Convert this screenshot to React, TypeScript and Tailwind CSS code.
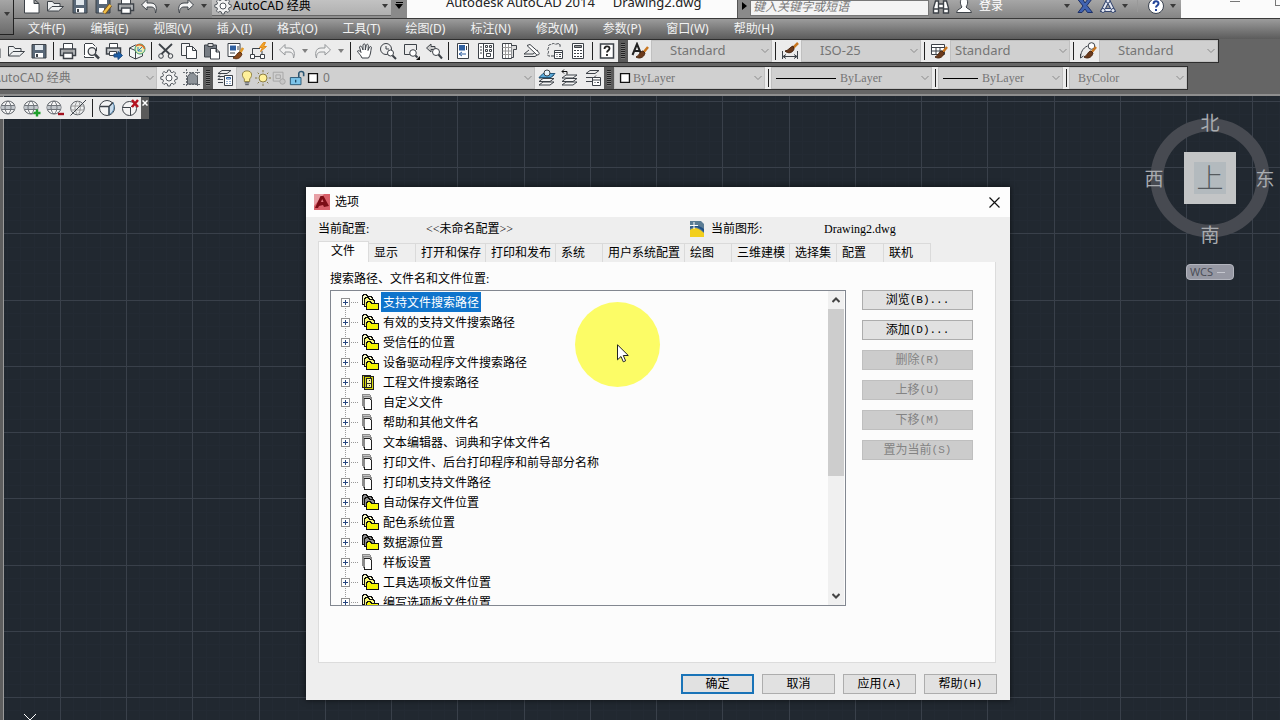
import React from "react";
import type { ReactNode } from "react";

const UI = "font-['Noto_Sans','Noto_Sans_CJK_SC',sans-serif]";
const SONG = "font-['Liberation_Serif','Noto_Sans_CJK_SC',serif]";

const GLOBE = (
  <>
    <ellipse cx="8" cy="8.500" rx="7" ry="6.500" fill="#f7f7f7" stroke="#5b6066" />
    <path d="M1.500 6.500h13v4h-13z" fill="#c2c7cc" stroke="none" />
    <path d="M1.500 6.500h13M1.500 10.500h13M8 2c-4 3-4 10 0 13M8 2c4 3 4 10 0 13" stroke="#70757b" />
  </>
);

const BRUSH = (
  <>
    <path d="M17 5l-5 6" stroke="#c9761f" strokeWidth="2.500" />
    <path d="M12 9c-3 0-3 4-7 6 3 2 8 1 9-4z" fill="#6b3a1c" stroke="#4a2812" />
  </>
);

const SHEETS = (
  <path d="M5 6h11l-4 3H1zM5 9.500h11l-4 3H1zM5 13h11l-4 3H1z" fill="#f4f4f4" />
);

// every drawing uses an 18 x 18 box
const ICONS: Record<string, ReactNode> = {
  new: <path d="M1.500 2h9.500l5 4.500V16H1.500zM11 2v4.500h5" fill="#fff" />,
  open: <path d="M1.500 14V4.500h5l1.500 2h6v3M1.500 14l4.500-4.500h11.500l-5 4.500z" fill="#eef0f1" />,
  save: (
    <>
      <path d="M2 2.500h14v13.500H2z" fill="#596878" />
      <path d="M5 3h8v5H5z" fill="#dfe6ec" stroke="none" />
      <path d="M5 11h8v4.500H5z" fill="#fff" stroke="none" />
      <path d="M7 12v3" strokeWidth="2" />
    </>
  ),
  saveas: (
    <>
      <path d="M2 2.500h14v13.500H2z" fill="#596878" />
      <path d="M5 3h8v4H5zM5 11h5v4.500H5z" fill="#fff" stroke="none" />
      <path d="M16.500 8L10 16" stroke="#7a4d12" strokeWidth="4" />
      <path d="M16.500 8L10 16" stroke="#f0c04a" strokeWidth="2.500" />
    </>
  ),
  print: (
    <>
      <path d="M4.500 7V1.500h9V7" fill="#fff" />
      <path d="M1.500 7h15v6.500h-15z" fill="#c9cccf" strokeWidth="1.500" />
      <path d="M4.500 11h9v5.500h-9z" fill="#fff" strokeWidth="1.500" />
      <path d="M3.500 9h11" stroke="#777" />
    </>
  ),
  preview: (
    <>
      <path d="M12 15.500H2.500v-14h8l4 4V9" fill="#fff" strokeDasharray="11 1" />
      <circle cx="10" cy="9.500" r="3.800" fill="#eee" strokeWidth="1.300" />
      <path d="M13 12.500l4 4" strokeWidth="2.500" />
    </>
  ),
  plot: (
    <>
      <path d="M4.500 6V1.500h8V6" fill="#fff" />
      <path d="M1.500 6h14v6h-14z" fill="#c9cccf" strokeWidth="1.500" />
      <path d="M4.500 9.500h7v4h-7z" fill="#fff" />
      <path d="M9 12h4V9.500l4.500 4-4.500 4V15H9z" fill="#1d5fa8" stroke="#1d4d84" />
    </>
  ),
  print3d: (
    <>
      <path d="M1.500 6l6-3 7 2v9l-7 3-6-3z" fill="#f2f5f5" />
      <path d="M1.500 6l6 2.500v8.500" />
      <circle cx="12" cy="7" r="5" fill="#e9efb4" stroke="#3c9a6b" />
      <path d="M8 4c4-3 8 0 8.500 3" stroke="#e06a2a" strokeWidth="1.500" />
      <path d="M10 9l4-4M10 5v4h4" stroke="#2f7fc2" />
    </>
  ),
  cut: (
    <>
      <path d="M2 2l10.500 10M15 2L4.500 12" strokeWidth="1.800" />
      <circle cx="4" cy="14" r="2.300" />
      <circle cx="13.500" cy="14" r="2.300" />
    </>
  ),
  copy: (
    <>
      <path d="M1.500 1.500h8v12h-8z" fill="#f4f4f4" />
      <path d="M6.500 4.500h6l4 4v8h-10zM12.500 4.500v4h4" fill="#fff" />
    </>
  ),
  paste: (
    <>
      <path d="M1.500 3h12v12h-12z" fill="#777d84" />
      <path d="M5 1.500h5v3H5z" fill="#ddd" />
      <path d="M7.500 6.500h5.500l3.500 3.500v7h-9zM13 6.500V10h3.500" fill="#fff" />
    </>
  ),
  match: (
    <>
      <path d="M2 1.500h12v13H2z" fill="#fff" />
      <path d="M4 3.500h6v5H4z" fill="#2e5fa0" stroke="none" />
      <path d="M12 4v4M4 11h5" />
      <path d="M17 6l-3 5" stroke="#e09a2c" strokeWidth="2.500" />
      <path d="M14 10c-4 1-3 4-7 6 4 2 8 0 9-4z" fill="#8a4a1c" stroke="#5d3112" />
    </>
  ),
  block: (
    <>
      <path d="M3.500 13V6.500H11M5 14.500h8V9" />
      <path d="M1.500 12.500h4v4h-4zM11.500 12.500h4v4h-4z" fill="#fff" />
      <path d="M14.500.5l-4 5h3l-2 4 6-5h-3l2-4z" fill="#f5a623" stroke="#e08a1c" />
    </>
  ),
  undo: (
    <path d="M7 2.500L1.500 8 7 13v-3h4c3 0 4.500 2 4.500 6 1.500-3 1.500-10-4.500-10H7z" fill="#f4f4f4" />
  ),
  redo: (
    <path d="M11 2.500L16.500 8 11 13v-3H7c-3 0-4.500 2-4.500 6C1 13 1 6 7 6h4z" fill="#f4f4f4" />
  ),
  pan: (
    <path
      d="M6 16c-1-3-4-5-4.500-7 1-1 2.500 0 3.500 1.500L3.500 5c.5-1.500 2-1 2.500.5L7 8V3c.5-1.500 2-1.500 2.300 0V8l1-5c.7-1.300 2.200-.8 2 .7L12 8.500l1.500-3.500c1-1 2.200-.3 1.800 1C14.500 10 15 12 12.500 16z"
      fill="#fff"
    />
  ),
  zoomrt: (
    <>
      <circle cx="7" cy="7" r="5.500" fill="#eee" />
      <path d="M7 4v3h3" />
      <circle cx="11.500" cy="11" r="3" fill="#fff" />
      <path d="M13.500 13.500l3.500 3.500" strokeWidth="2" />
    </>
  ),
  zoomwin: (
    <>
      <path d="M8 12.500H2.500v-10h12V8" />
      <circle cx="11" cy="11" r="3.300" fill="#fff" />
      <path d="M13.500 13.500l2 2" strokeWidth="2" />
      <path d="M18 14v4h-4z" fill="#111" stroke="none" />
    </>
  ),
  zoomprev: (
    <>
      <path d="M6 2L1.500 6 6 10V7.500h4v-3H6z" fill="#ccc" />
      <circle cx="11" cy="10" r="3.500" fill="#fff" />
      <path d="M13.500 12.500l3.500 4" strokeWidth="2" />
    </>
  ),
  props: (
    <>
      <path d="M3.500 1.500h11v15h-11z" fill="#fff" />
      <path d="M5 3h6v5.500H5z" fill="#2e5fa0" stroke="none" />
      <path d="M12.500 4v4" />
      <path d="M8 10l-3 2 3 2M6 12h6" stroke="#2e5fa0" />
    </>
  ),
  design: (
    <>
      <path d="M1.500 1.500h15v15h-15zM6.500 1.500v15" fill="#fff" />
      <path d="M3 5h2M3 8h2M3 11h2" />
      <path d="M8.500 3.500h2v2h-2zM12.500 3.500h2v2h-2zM8.500 7.500h2v2h-2zM12.500 7.500h2v2h-2zM9.500 11.500h4v3h-4z" />
    </>
  ),
  palette: (
    <>
      <path d="M2.500 1.500h9v15h-9z" fill="#fff" />
      <path d="M11.500 3.500h5v4h-3v8h-2" fill="#ddd" />
      <path d="M2.500 5.500h9M2.500 9h9M2.500 12.500h9M5.500 2v14M8.500 2v14" stroke="#999" />
    </>
  ),
  sheetset: (
    <>
      <path d="M1 12h9l5-4M1 14.500h11l4-3M1 12l5-4" />
      <path d="M4 3.500l3-1 9 8c1 2-1 3-2.500 2z" fill="#fff" />
    </>
  ),
  markup: (
    <>
      <path
        d="M8 14H2.500c-2-2 .5-3 0-4.500-2-2 .5-3 0-4.500C2 2 5 3 6 2c2-1.500 3 1 4.500 0 3-1 4 0 3.500 3"
        strokeDasharray="3 1"
      />
      <path d="M8.500 8.500h8v8h-8zM8.500 10.500h8M10.500 12.500h1M13 12.500h2M10.500 14.500h1M13 14.500h2" fill="#fff" />
    </>
  ),
  calc: (
    <>
      <path d="M3.500 1.500h11v15h-11z" fill="#fff" />
      <path d="M5.500 3.500h7v2h-7z" fill="#999" />
      <path d="M5 8.500h2M8 8.500h2M11 8.500h2M5 11.500h2M8 11.500h2M11 11.500h2M5 14.500h2M8 14.500h2M11 14.500h2" />
    </>
  ),
  help: (
    <>
      <path d="M2.500 2h13v14h-13z" fill="#fff" strokeWidth="1.500" />
      <path d="M6.500 7c0-3.500 5-3.500 5-.5 0 2-2.500 2-2.500 4M9 12v2" stroke="#222" strokeWidth="1.800" />
    </>
  ),
  textstyle: (
    <>
      <path d="M1.500 13L6 2l4.500 11M3 9h6" stroke="#222" strokeWidth="2" />
      {BRUSH}
    </>
  ),
  dimstyle: (
    <>
      <path d="M1.500 9v8M16.500 9v8M2 14.500h14M5 12.500l-3 2 3 2M13 12.500l3 2-3 2" />
      <path d="M17 1l-5 5" stroke="#c9761f" strokeWidth="2.500" />
      <path d="M12 4c-3 1-5 5-8 5 3 3 8 2 9-2z" fill="#6b3a1c" stroke="#4a2812" />
    </>
  ),
  tablestyle: (
    <>
      <path d="M1.500 2.500h13v10h-13zM1.500 5.500h13M1.500 9h13M6 5v7.500M10 5v7.500" fill="#fff" />
      {BRUSH}
    </>
  ),
  leaderstyle: (
    <>
      <path d="M1.500 16c0-5 2-10 7-12M1.500 16l3-2M1.500 16V12" />
      <circle cx="12.500" cy="4" r="3.300" fill="#fff" />
      {BRUSH}
    </>
  ),
  gear: (
    <>
      <path
        d="M7.800 1h2.400l.4 2 1.600.7 1.800-1.200 1.600 1.600-1.100 1.800.6 1.500 2.100.4v2.400l-2.100.4-.6 1.500 1.100 1.800-1.600 1.600-1.800-1.200-1.600.7-.4 2H7.800l-.4-2-1.600-.7L4 15.500l-1.600-1.600 1.100-1.800-.6-1.500L.8 10.200V7.800l2.100-.4.6-1.500-1.100-1.800L4 2.500l1.800 1.200L7.400 3z"
        fill="#f2f2f2"
        stroke="#555a60"
      />
      <circle cx="9" cy="9" r="3" fill="#fff" stroke="#555a60" />
    </>
  ),
  workspace: (
    <>
      <path d="M0 3.500h18M0 15.500h18M3.500 0v18M14.500 0v18" strokeDasharray="2 1" stroke="#6b7076" />
      <path d="M4.500 15V7.500l3-3.500h3l4 4v7z" fill="#8d9399" stroke="#555a60" />
    </>
  ),
  layers: (
    <>
      <path d="M6 1.500h9l-4 3H2zM3 7.500H2l2-2M3 10.500H2l2-2M3 13.500H2M2 7.500h6M2 10.500h5M2 13.500h5" />
      <path d="M8.500 6.500h8v10h-8z" fill="#fff" />
      <path d="M10.500 8.500h4v1.500h-4zM10.500 12.500h1M13.500 12.500h1M10.500 14.500h1M13.500 14.500h1" stroke="#2c62a4" />
    </>
  ),
  bulb: (
    <>
      <path d="M9 1c-6.500 0-6 6.500-3 9v3h6v-3c3-2.500 3.500-9-3-9z" fill="#fff19a" stroke="#8a7a3a" />
      <path d="M6.500 14.500h5M7 16.500h4" />
    </>
  ),
  sun: (
    <>
      <circle cx="9" cy="9" r="4.500" fill="#fff19a" stroke="#7d7036" />
      <path d="M9 0v2.500M9 15.500V18M0 9h2.500M15.500 9H18M3 3l1.500 1.500M13.500 13.500L15 15M3 15l1.500-1.500M13.500 4.500L15 3" stroke="#7d7036" />
    </>
  ),
  vpfreeze: (
    <g stroke="#a3a3a3">
      <path d="M2.500 2.500h11v10h-11zM5.500 5.500h5v4h-5z" />
      <circle cx="13" cy="13" r="3" fill="#c6c6c6" />
    </g>
  ),
  lock: (
    <>
      <path d="M11 8V4c0-3 5.500-3 5.500 0v3" stroke="#2b5672" strokeWidth="1.800" />
      <path d="M1.500 8.500h12v8h-12z" fill="#7cc4ea" stroke="#204f6d" />
      <path d="M7.500 11v3" stroke="#204f6d" strokeWidth="1.500" />
    </>
  ),
  swatch: <path d="M4 4h10v10H4z" fill="#fff" stroke="#111" strokeWidth="1.500" />,
  layercurrent: (
    <>
      {SHEETS}
      <path d="M5 4.500h12l-4 4H1z" fill="#5aa9d8" stroke="#23577c" />
      <circle cx="9" cy="4" r="3" fill="#e8f4fb" />
    </>
  ),
  layerprev: (
    <>
      {SHEETS}
      <path d="M1 2.500h5v3M3 .5l-2 2 2 2" stroke="#111" />
    </>
  ),
  layerstate: (
    <>
      <path d="M6 1.500h9l-4 3H2zM2 8.500h8l2-2M2 12.500h6" />
      <path d="M8.500 8.500h8v8h-8zM8.500 11h8M10.500 13.500h1M13 13.500h2" fill="#fff" />
    </>
  ),
  globe: GLOBE,
  globeadd: (
    <>
      {GLOBE}
      <path d="M14 10.500v7M10.500 14h7" stroke="#1fa02c" strokeWidth="2.400" />
    </>
  ),
  globesub: (
    <>
      {GLOBE}
      <path d="M12 15h6" stroke="#a3121f" strokeWidth="2.400" />
    </>
  ),
  globeoff: (
    <>
      <circle cx="8.500" cy="9" r="6.800" fill="#eef0f1" stroke="#5b6066" />
      <path d="M2 7h13M2 11h13M9 2c-4 3-4 10 0 14M9 2c3 3 3 10 0 14" stroke="#999" />
      <path d="M1.500 16.500L17 1" />
    </>
  ),
  cube: (
    <>
      <circle cx="9" cy="9" r="7.500" fill="#f4f4f4" />
      <path d="M11 7.500L15 3.500c2 4 1 8-1.500 10.500L11 16z" fill="#c9dcec" stroke="#4d7fa8" />
      <path d="M2 7.500h9v8.500M11 7.500l4-4" strokeWidth="1.300" />
    </>
  ),
  cubedel: (
    <>
      <circle cx="8.500" cy="9.500" r="7" fill="#f4f4f4" />
      <path d="M1.500 8.500h8v8M9.500 8.500l3-3" />
      <path d="M11 1l6 7M17 1l-6 7" stroke="#b5121f" strokeWidth="2.500" />
    </>
  ),
  binoculars: (
    <path d="M3.500 4h3v3h5V4h3l2 7v5h-5v-5h-5v5h-5v-5zM6.500 7v4M11.500 7v4M2 12h4M12 12h4" fill="#fff" strokeWidth="1.400" />
  ),
  person: (
    <path d="M9 1.500c-5 0-4 6-2 8.500-1 2-5 2-5.500 5.500h15C16 12 12 12 11 10c2-2.500 3-8.500-2-8.500z" fill="#fff" />
  ),
  exchange: (
    <path d="M1.500 2h5L9 6l3-4h4l-5 6.500 5.500 7h-5L9 12l-3 3.500H2l5-6.500z" fill="#4063b0" stroke="#1d3066" />
  ),
  triangle: (
    <>
      <path d="M9 3l5 10H4z" fill="none" stroke="#35466f" strokeWidth="4" />
      <path d="M9 3l5 10H4z" fill="none" stroke="#e6eaf4" strokeWidth="2" />
      <circle cx="9" cy="4" r="2" fill="#e6eaf4" stroke="#35466f" />
      <circle cx="4" cy="13.500" r="2" fill="#e6eaf4" stroke="#35466f" />
      <circle cx="14" cy="13.500" r="2" fill="#e6eaf4" stroke="#35466f" />
    </>
  ),
  question: (
    <>
      <circle cx="9" cy="9" r="7.500" fill="#fff" stroke="#39414f" />
      <path d="M6.500 7c0-3.500 5-3.500 5-.5 0 2-2.500 2-2.500 4M9 12v2" stroke="#23459a" strokeWidth="2" />
    </>
  ),
};

const Icon = ({ name, size = "size-[18px]" }: { name: string; size?: string }) => (
  <svg viewBox="0 0 18 18" className={`${size} shrink-0`} fill="none" stroke="#3d4248" aria-hidden="true">
    {ICONS[name]}
  </svg>
);

const Tool = ({ name, faded }: { name: string; faded?: boolean }) => (
  <button
    aria-label={name}
    className={`flex h-full w-[23px] shrink-0 items-center justify-center ${faded ? "opacity-50" : ""}`}
  >
    <Icon name={name} />
  </button>
);

const Sep = () => (
  <div className="flex h-full w-[6px] shrink-0 items-center justify-center">
    <div className="h-[18px] w-px bg-[#222]" />
  </div>
);

const Caret = ({ className = "w-[13px]" }: { className?: string }) => (
  <span className={`flex shrink-0 justify-center ${className}`}>
    <svg viewBox="0 0 6 4" className="h-1 w-[6px]" fill="#3a3a3a" aria-hidden="true">
      <path d="M0 0h6L3 4z" />
    </svg>
  </span>
);

const Grip = () => (
  <div className="flex w-[10px] shrink-0 items-center justify-center bg-[#5a5a5a]">
    <div className="h-4 w-1 bg-[repeating-linear-gradient(#222_0_1px,#777_1px_2px)]" />
  </div>
);

type ComboProps = {
  label: string;
  value: string;
  width: string;
  font?: string;
  lead?: ReactNode;
};

const Combo = ({ label, value, width, font = `${UI} text-[13px]`, lead }: ComboProps) => (
  <div className={`flex h-full shrink-0 items-center border border-[#c0c0c0] bg-[#d0d0d0] text-[#757575] ${width}`}>
    {lead}
    <select aria-label={label} className={`h-full min-w-0 flex-1 appearance-none outline-none ${font}`}>
      <option>{value}</option>
    </select>
    <svg viewBox="0 0 8 6" className="mr-[2px] h-[6px] w-2 shrink-0" fill="none" stroke="#8a8a8a" aria-hidden="true">
      <path d="M.5 1L4 4.500 7.500 1" />
    </svg>
  </div>
);

const MENUS = [
  "文件(F)",
  "编辑(E)",
  "视图(V)",
  "插入(I)",
  "格式(O)",
  "工具(T)",
  "绘图(D)",
  "标注(N)",
  "修改(M)",
  "参数(P)",
  "窗口(W)",
  "帮助(H)",
];

const TitleBar = () => (
  <div className="flex h-[18px] overflow-hidden bg-[#8f8f8f]">
    <div className="flex w-[212px] shrink-0 bg-linear-to-b from-[#a6a6a6] to-[#858585] pl-5">
      <div className="flex h-[11px] items-center">
        <Tool name="new" />
        <Tool name="open" />
        <span className="w-[2px]" />
        <Tool name="save" />
        <Tool name="saveas" />
        <Tool name="print" />
        <Tool name="undo" />
        <Caret className="w-[14px]" />
        <Tool name="redo" />
        <Caret className="w-[14px]" />
      </div>
    </div>
    <div className="flex h-4 w-[179px] shrink-0 items-center border-b border-[#666] bg-linear-to-b from-[#c2c2c2] to-[#b0b0b0] pb-1 pl-[2px] text-black">
      <Icon name="gear" />
      <select aria-label="工作空间" className={`ml-px min-w-0 flex-1 appearance-none text-xs outline-none ${UI}`}>
        <option>AutoCAD 经典</option>
      </select>
      <Caret />
    </div>
    <div className="flex w-4 shrink-0 flex-col items-center bg-[#8a8a8a]">
      <div className="mt-[2px] h-px w-[7px] bg-black" />
      <svg viewBox="0 0 8 5" className="mt-[1px] h-[5px] w-2" aria-hidden="true">
        <path d="M0 0h8L4 5z" />
      </svg>
    </div>
    <div className={`flex min-w-0 flex-1 gap-[18px] bg-[#fbfbfb] pl-[39px] text-[13px] leading-[5px] whitespace-nowrap text-[#222] ${UI}`}>
      <span>Autodesk AutoCAD 2014</span>
      <span>Drawing2.dwg</span>
    </div>
    <button aria-label="展开" className="flex w-[13px] shrink-0 justify-center border-l border-[#555] bg-[#8a8a8a] pt-[2px]">
      <svg viewBox="0 0 5 8" className="h-2 w-[5px]" aria-hidden="true">
        <path d="M0 0v8l5-4z" />
      </svg>
    </button>
    <input
      aria-label="搜索"
      placeholder="键入关键字或短语"
      className={`h-4 w-[179px] shrink-0 border border-[#777] bg-[#f4f4f4] pb-[2px] pl-[2px] text-xs italic outline-none placeholder:text-[#777] ${UI}`}
    />
    <div className="flex w-[252px] shrink-0 bg-linear-to-b from-[#a6a6a6] to-[#858585]">
      <div className="flex h-3 w-full items-center">
        <Tool name="binoculars" />
        <Tool name="person" />
        <button className={`ml-1 w-[82px] text-left text-xs text-white ${UI}`}>登录</button>
        <Caret className="w-3" />
        <Tool name="exchange" />
        <Tool name="triangle" />
        <Caret className="w-3" />
        <span className="mx-[6px] h-3 w-px bg-[#999]" />
        <Tool name="question" />
        <Caret className="w-3" />
      </div>
    </div>
    <div className="flex w-[99px] shrink-0 items-start justify-end gap-[35px] overflow-hidden bg-[#fbfbfb]">
      <button aria-label="最小化" className="mt-[1px] h-px w-[10px] bg-[#777]" />
      <button aria-label="最大化" className="-mr-[5px] h-[6px] w-[10px] border border-t-0 border-[#777]" />
    </div>
  </div>
);

const StandardRow = () => (
  <div className="flex h-6">
    <div className="flex overflow-hidden border-y border-r border-[#2e2e2e] bg-[#ececec]">
      <div className="-ml-[19px] flex w-[637px] shrink-0">
        <Tool name="new" />
        <Tool name="open" />
        <Tool name="save" />
        <Sep />
        <Tool name="print" />
        <Tool name="preview" />
        <Tool name="plot" />
        <Tool name="print3d" />
        <Sep />
        <Tool name="cut" />
        <Tool name="copy" />
        <Tool name="paste" />
        <Tool name="match" />
        <Tool name="block" />
        <Sep />
        <Tool name="undo" faded />
        <Caret className="w-[13px] items-center opacity-60" />
        <Tool name="redo" faded />
        <Caret className="w-[13px] items-center opacity-60" />
        <Sep />
        <Tool name="pan" />
        <Tool name="zoomrt" />
        <Tool name="zoomwin" />
        <Tool name="zoomprev" />
        <Sep />
        <Tool name="props" />
        <Tool name="design" />
        <Tool name="palette" />
        <Tool name="sheetset" />
        <Tool name="markup" />
        <Tool name="calc" />
        <Sep />
        <Tool name="help" />
      </div>
      <Grip />
      <Tool name="textstyle" />
      <Combo label="文字样式" value="Standard" width="w-[121px] pl-[18px]" />
      <Sep />
      <Tool name="dimstyle" />
      <Combo label="标注样式" value="ISO-25" width="w-[120px] pl-[18px]" />
      <Sep />
      <Tool name="tablestyle" />
      <Combo label="表格样式" value="Standard" width="w-[120px] pl-1" />
      <Sep />
      <Tool name="leaderstyle" />
      <Combo label="多重引线样式" value="Standard" width="w-[119px] pl-[18px]" />
    </div>
  </div>
);

const LayerRow = () => (
  <div className="mt-[3px] flex h-6">
    <div className="flex overflow-hidden border-y border-r border-[#2e2e2e] bg-[#ececec]">
      <div className="-ml-[10px] flex">
        <Combo label="工作空间" value="AutoCAD 经典" width="w-[167px] pl-[2px]" font={`${UI} text-xs`} />
      </div>
      <Tool name="gear" />
      <Tool name="workspace" />
      <Grip />
      <Tool name="layers" />
      <Combo
        label="图层"
        value="0"
        width="w-[299px] pl-[2px]"
        font={`${UI} text-xs`}
        lead={
          <div className="mr-[2px] flex">
            <Icon name="bulb" size="size-4" />
            <Icon name="sun" size="size-4" />
            <Icon name="vpfreeze" size="size-4" />
            <span className="w-[2px]" />
            <Icon name="lock" size="size-4" />
            <Icon name="swatch" size="size-4" />
          </div>
        }
      />
      <Tool name="layercurrent" />
      <Tool name="layerprev" />
      <Tool name="layerstate" />
      <Grip />
      <Combo
        label="颜色"
        value="ByLayer"
        width="w-[151px] pl-[2px]"
        font={`${SONG} text-xs`}
        lead={<Icon name="swatch" size="size-4" />}
      />
      <Sep />
      <Combo
        label="线型"
        value="ByLayer"
        width="w-[161px] pl-1"
        font={`${SONG} text-xs`}
        lead={<div className="mr-1 h-px w-[60px] bg-black" />}
      />
      <Sep />
      <Combo
        label="线宽"
        value="ByLayer"
        width="w-[125px] pl-1"
        font={`${SONG} text-xs`}
        lead={<div className="mr-1 h-px w-[35px] bg-black" />}
      />
      <Sep />
      <Combo label="打印样式" value="ByColor" width="w-[118px] pl-2" font={`${SONG} text-xs`} />
    </div>
  </div>
);

const PITCH = 66.24;

const Grid = () => {
  const lines = Array.from({ length: 200 }, (_, i) => i);
  const minor = lines.filter((i) => i % 5 !== 0);
  const major = lines.filter((i) => i % 5 === 0);
  const spot = (i: number, start: number) => Math.round(start + (i * PITCH) / 5);
  return (
    <svg className="absolute inset-0 size-full" shapeRendering="crispEdges" aria-hidden="true">
      {[...minor, ...major].map((i) => (
        <g key={i} fill={i % 5 === 0 ? "#39404a" : "#232a33"}>
          <rect x={spot(i, 60 - PITCH)} y="0" width="1" height="100%" />
          <rect x="0" y={spot(i, 5)} width="100%" height="1" />
        </g>
      ))}
    </svg>
  );
};

const ViewCube = () => (
  <div className="absolute top-1 right-0 flex w-[140px] flex-col items-center">
    <svg viewBox="0 0 140 160" className="h-40 w-full" aria-label="ViewCube">
      <circle cx="70" cy="78" r="53" fill="none" stroke="#474a51" strokeWidth="13" />
      <rect x="44" y="52" width="52" height="52" fill="#c3c5c6" />
      <rect x="54" y="62" width="32" height="32" fill="#b3babe" />
      <text x="70" y="88" textAnchor="middle" fontSize="27" fontWeight="300" fill="#555a5e" fontFamily="Noto Sans CJK SC">
        上
      </text>
      <g fontSize="19" fill="#a9acb0" textAnchor="middle" fontFamily="Noto Sans CJK SC">
        <text x="70" y="30">北</text>
        <text x="14" y="86">西</text>
        <text x="125" y="86">东</text>
        <text x="70" y="142">南</text>
      </g>
    </svg>
    <button
      className={`mt-1 flex h-4 w-12 items-center rounded border border-[#b3b5be] bg-[#9698a3] pl-[3px] text-[11px] text-[#4c4f58] ${UI}`}
    >
      WCS
      <span className="ml-1 h-px w-2 bg-[#c4c6ce]" />
    </button>
  </div>
);

const MeshToolbar = () => (
  <div className="absolute top-[1px] left-0 flex h-[22px] bg-[#ececec]">
    <div className="-ml-[3px] flex">
      <Tool name="globe" />
      <Tool name="globeadd" />
      <Tool name="globesub" />
      <Tool name="globeoff" />
      <Sep />
      <Tool name="cube" />
      <Tool name="cubedel" />
    </div>
    <button aria-label="关闭" className="flex w-2 justify-center bg-[#5a5a5a] pt-[3px]">
      <svg viewBox="0 0 6 6" className="size-[6px]" stroke="#fff" strokeWidth="1.500" aria-hidden="true">
        <path d="M.5.5l5 5M5.500.5l-5 5" />
      </svg>
    </button>
  </div>
);

const TABS = ["显示", "打开和保存", "打印和发布", "系统", "用户系统配置", "绘图", "三维建模", "选择集", "配置", "联机"];

const TREE = [
  ["folder", "支持文件搜索路径"],
  ["folder", "有效的支持文件搜索路径"],
  ["folder", "受信任的位置"],
  ["folder", "设备驱动程序文件搜索路径"],
  ["binder", "工程文件搜索路径"],
  ["pages", "自定义文件"],
  ["pages", "帮助和其他文件名"],
  ["pages", "文本编辑器、词典和字体文件名"],
  ["pages", "打印文件、后台打印程序和前导部分名称"],
  ["pages", "打印机支持文件路径"],
  ["dark", "自动保存文件位置"],
  ["folder", "配色系统位置"],
  ["dark", "数据源位置"],
  ["pages", "样板设置"],
  ["folder", "工具选项板文件位置"],
  ["folder", "编写选项板文件位置"],
];

const SIDE_BUTTONS = [
  { text: "浏览", key: "(B)...", enabled: true },
  { text: "添加", key: "(D)...", enabled: true },
  { text: "删除", key: "(R)", enabled: false },
  { text: "上移", key: "(U)", enabled: false },
  { text: "下移", key: "(M)", enabled: false },
  { text: "置为当前", key: "(S)", enabled: false },
];

const TreeIcon = ({ kind }: { kind: string }) => {
  if (kind === "binder") {
    return (
      <svg viewBox="0 0 18 16" className="h-4 w-[18px]" shapeRendering="crispEdges" fill="#d8d80a" stroke="#222" aria-hidden="true">
        <path d="M1.500 1.500h8v12h-8zM3.500 2.500h9v13h-9z" />
        <path d="M5.500 4.500h5v9h-5z" fill="#f8f89a" />
        <path d="M7.500 6.500h1M7.500 11.500h1M5.500 9h5" />
      </svg>
    );
  }
  if (kind === "pages") {
    return (
      <svg viewBox="0 0 18 16" className="h-4 w-[18px]" shapeRendering="crispEdges" fill="#fff" stroke="#8a8a8a" aria-hidden="true">
        <path d="M1.500.5h7l1 1v10h-8zM2.500 2.500h7l1 1v10h-8z" fill="#c4c4c4" />
        <path d="M3.500 4.500h5l2 2v9h-7z" stroke="#222" />
        <path d="M3.500 4.500v8" />
      </svg>
    );
  }
  return (
    <svg viewBox="0 0 18 16" className="h-4 w-[18px]" shapeRendering="crispEdges" stroke="#111" aria-hidden="true">
      <path d="M1.500 10.500V2.500l1-2h3l1 2h4l1 2v6z" fill={kind === "dark" ? "#8f8f8f" : "#fafac8"} />
      <path d="M3.500 12.500V5.500l1-2h3l1 2h4l1 2v5z" fill={kind === "dark" ? "#8f8f8f" : "#f6f67a"} />
      <path d="M5.500 15.500V9.500l1-2h3l1 2h7v6z" fill="#f6f600" />
    </svg>
  );
};

const FileTree = () => (
  <div className="flex h-[316px] w-[516px] border border-[#828790] pr-[1px]">
    <ul className="min-w-0 flex-1 overflow-hidden pt-[1px]">
      {TREE.map(([kind, text], i) => (
        <li key={text} className="flex h-5 items-center">
          <div
            className={`ml-[10px] flex h-full w-[9px] items-center bg-[repeating-linear-gradient(#999_0_1px,transparent_1px_2px)] bg-[length:1px_100%] bg-no-repeat ${i === 0 ? "bg-[position:4px_10px]" : "bg-[position:4px_0px]"}`}
          >
            <button aria-label="展开" className="flex size-[9px] items-center justify-center border border-[#919191] bg-white">
              <svg viewBox="0 0 5 5" className="size-[5px]" shapeRendering="crispEdges" fill="#26457f" aria-hidden="true">
                <path d="M0 2h5v1H0zM2 0h1v5H2z" />
              </svg>
            </button>
          </div>
          <div className="h-px w-2 bg-[repeating-linear-gradient(90deg,transparent_0_1px,#999_1px_2px)]" />
          <div className="ml-[3px] w-5">
            <TreeIcon kind={kind} />
          </div>
          <span className={`flex h-full items-center px-[2px] pt-[2px] ${i === 0 ? "bg-[#0f74cc] text-white" : ""}`}>
            {text}
          </span>
        </li>
      ))}
    </ul>
    <div className="flex w-4 flex-col bg-[#f0f0f0]">
      <button aria-label="向上滚动" className="flex h-[18px] items-center justify-center">
        <svg viewBox="0 0 8 6" className="h-[6px] w-2" fill="none" stroke="#444" strokeWidth="2" aria-hidden="true">
          <path d="M.5 5L4 1.500 7.500 5" />
        </svg>
      </button>
      <div className="h-[167px] bg-[#cdcdcd]" />
      <button aria-label="向下滚动" className="mt-auto flex h-[18px] items-center justify-center">
        <svg viewBox="0 0 8 6" className="h-[6px] w-2" fill="none" stroke="#444" strokeWidth="2" aria-hidden="true">
          <path d="M.5 1L4 4.500 7.500 1" />
        </svg>
      </button>
    </div>
  </div>
);

const Key = ({ children }: { children: ReactNode }) => (
  <span className="font-['Liberation_Mono',monospace] text-[11px]">{children}</span>
);

const OptionsDialog = () => (
  <div
    role="dialog"
    aria-label="选项"
    className={`absolute top-[91px] left-[306px] w-[704px] bg-[#eeeeee] text-xs text-black shadow-[0_0_6px_rgba(0,0,0,0.6)] ${SONG}`}
  >
    <div className={`flex h-[30px] items-center bg-[#fdfdfd] pr-[10px] pl-2 ${UI}`}>
      <svg viewBox="0 0 16 16" className="mr-[5px] size-4" aria-hidden="true">
        <path d="M0 0h16v16H0z" fill="#d9606a" />
        <path d="M0 0h10L0 12z" fill="#e8a0a6" />
        <path d="M1 14L6.500 2h3L15 12l-5 1-1-2-4 1-1 2z" fill="#7c0d16" />
        <path d="M7 8l1.200-3L9.500 8z" fill="#e0737c" />
      </svg>
      <span>选项</span>
      <button aria-label="关闭" className="ml-auto">
        <svg viewBox="0 0 11 11" className="size-[11px]" stroke="#111" strokeWidth="1.200" aria-hidden="true">
          <path d="M.5.5l10 10M10.500.5l-10 10" />
        </svg>
      </button>
    </div>
    <div className="flex h-6 items-center px-3">
      <span className="w-[108px]">当前配置:</span>
      <span className="w-[263px]">&lt;&lt;未命名配置&gt;&gt;</span>
      <svg viewBox="0 0 16 16" className="mr-[6px] size-4" aria-hidden="true">
        <path d="M1 0h11l3 3v13H1z" fill="#5b7c94" />
        <path d="M1 9c6-4 9-1 14 3v4H1z" fill="#f2cf1d" />
        <path d="M1 7c6-2 9-1 14 4V8C10 4 6 4 1 6z" fill="#1f4f85" />
        <path d="M5 1v7M1 4.500h8" stroke="#fff" />
      </svg>
      <span className="w-[113px]">当前图形:</span>
      <span>Drawing2.dwg</span>
    </div>
    <div role="tablist" className="mx-3 flex h-[21px] items-end">
      <button
        role="tab"
        aria-selected="true"
        className="h-full w-[51px] border border-b-0 border-[#dcdcdc] bg-[#fcfcfc] pb-[2px] pl-3 text-left"
      >
        文件
      </button>
      {TABS.map((tab) => (
        <button
          role="tab"
          key={tab}
          className="h-[19px] min-w-[47px] border-t border-r border-[#dadada] pr-1 pl-[5px] text-left"
        >
          {tab}
        </button>
      ))}
    </div>
    <div className="mr-[14px] ml-3 h-[401px] border border-t-0 border-[#dcdcdc] bg-[#fcfcfc] pt-[9px] pl-[11px]">
      <p className="mb-[3px] leading-4">搜索路径、文件名和文件位置:</p>
      <div className="flex gap-4">
        <FileTree />
        <div className="flex w-[111px] flex-col gap-[10px]">
          {SIDE_BUTTONS.map(({ text, key, enabled }) => (
            <button
              key={text}
              disabled={!enabled}
              className="flex h-5 items-center justify-center border border-[#adadad] bg-[#e1e1e1] disabled:border-[#bfbfbf] disabled:bg-[#cccccc] disabled:text-[#838383]"
            >
              {text}
              <Key>{key}</Key>
            </button>
          ))}
        </div>
      </div>
    </div>
    <div className="flex justify-end gap-2 pt-[11px] pr-[13px] pb-[6px]">
      <button className="h-5 w-[73px] border-2 border-[#1a74b8] bg-[#e1e1e1] leading-4">确定</button>
      <button className="h-5 w-[73px] border border-[#adadad] bg-[#e1e1e1]">取消</button>
      <button className="flex h-5 w-[73px] items-center justify-center border border-[#adadad] bg-[#e1e1e1]">
        应用<Key>(A)</Key>
      </button>
      <button className="flex h-5 w-[73px] items-center justify-center border border-[#adadad] bg-[#e1e1e1]">
        帮助<Key>(H)</Key>
      </button>
    </div>
    {/* click highlight and mouse pointer */}
    <div className="pointer-events-none absolute top-[115px] left-[269px] size-[85px] rounded-full bg-[#fcfc66]">
      <svg viewBox="0 0 12 19" className="absolute top-[42px] left-[42px] h-[19px] w-3" fill="#fff" stroke="#222" aria-hidden="true">
        <path d="M.5.8v15l3.500-3.300 2.300 5.300 2.300-1-2.300-5.300h5z" />
      </svg>
    </div>
  </div>
);

const App = () => (
  <div className="relative flex min-h-screen w-full flex-col overflow-hidden bg-[#212830]">
    <header className="shrink-0 border-b-2 border-[#8e8e8e] bg-[#656565] pb-1">
      <TitleBar />
      <nav
        className={`flex h-[21px] items-center gap-[25px] border-t border-[#3a3a3a] bg-linear-to-b from-[#9c9c9c] to-[#5c5c5c] pl-7 text-xs text-[#f2f2f2] ${UI}`}
      >
        {MENUS.map((menu) => (
          <button key={menu} className="shrink-0">
            {menu}
          </button>
        ))}
      </nav>
      <StandardRow />
      <LayerRow />
    </header>
    <button
      aria-label="应用程序菜单"
      className="absolute top-0 left-0 flex h-[35px] w-[14px] items-start justify-center border-r border-b border-[#222] bg-linear-to-b from-[#a6a6a6] to-[#6c6c6c] pt-3"
    >
      <Caret />
    </button>
    <main className="relative min-h-[624px] flex-1 overflow-hidden">
      <Grid />
      <div className="absolute inset-y-0 left-0 w-1 border-r border-[#9a9a9a] bg-[#5e5e5e]" />
      <MeshToolbar />
      <ViewCube />
      <svg viewBox="0 0 12 6" className="absolute bottom-0 left-6 h-[6px] w-3" stroke="#fff" aria-hidden="true">
        <path d="M0 0l6 6 6-6" fill="none" />
      </svg>
      <OptionsDialog />
    </main>
  </div>
);

export default App;
